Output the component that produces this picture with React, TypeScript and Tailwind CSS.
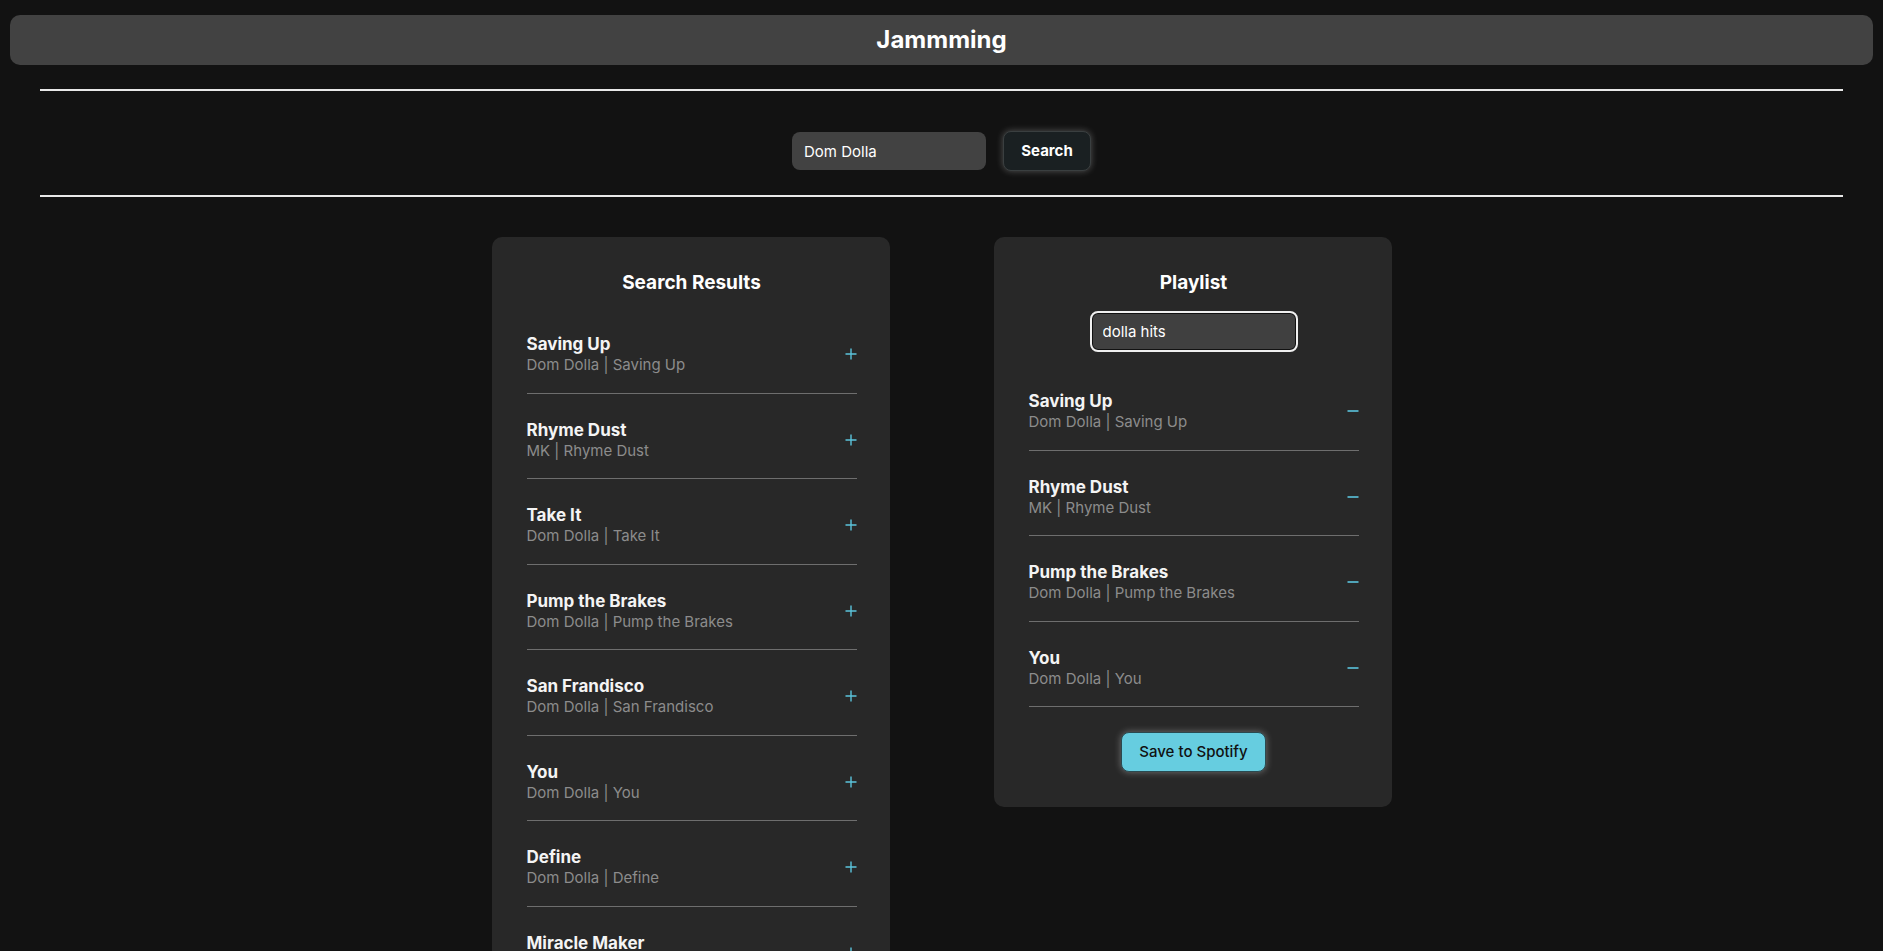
import React from "react";

type Track = { name: string; artist: string; album: string };

const results: Track[] = [
  { name: "Saving Up", artist: "Dom Dolla", album: "Saving Up" },
  { name: "Rhyme Dust", artist: "MK", album: "Rhyme Dust" },
  { name: "Take It", artist: "Dom Dolla", album: "Take It" },
  { name: "Pump the Brakes", artist: "Dom Dolla", album: "Pump the Brakes" },
  { name: "San Frandisco", artist: "Dom Dolla", album: "San Frandisco" },
  { name: "You", artist: "Dom Dolla", album: "You" },
  { name: "Define", artist: "Dom Dolla", album: "Define" },
  { name: "Miracle Maker", artist: "Dom Dolla", album: "Miracle Maker" },
  { name: "Eat Your Man", artist: "Dom Dolla", album: "Eat Your Man" },
  { name: "Girl$", artist: "Dom Dolla", album: "Girl$" },
];

const playlist: Track[] = [results[0], results[1], results[3], results[5]];

function PlusIcon() {
  return (
    <svg width="12" height="12" viewBox="0 0 12 12" className="text-[#5bc4dc]">
      <path d="M6 0.5v11M0.5 6h11" stroke="currentColor" strokeWidth="1.4" fill="none" />
    </svg>
  );
}

function MinusIcon() {
  return (
    <svg width="12" height="12" viewBox="0 0 12 12" className="text-[#5bc4dc]">
      <path d="M0.5 6h11" stroke="currentColor" strokeWidth="1.6" fill="none" />
    </svg>
  );
}

function TrackRow({ track, action }: { track: Track; action: "add" | "remove" }) {
  return (
    <li className="flex items-center justify-between border-b border-[#6e6e6e] pt-[25px] pb-[17.5px]">
      <div className="flex flex-col">
        <span className="text-[17px] leading-[22px] font-bold text-[#f4f4f4]">{track.name}</span>
        <span className="text-[15px] leading-[20px] text-[#8c8c8c]">
          {track.artist} | {track.album}
        </span>
      </div>
      <button type="button" className="flex h-[20px] w-[14px] items-center justify-end" aria-label={action === "add" ? "Add track" : "Remove track"}>
        {action === "add" ? <PlusIcon /> : <MinusIcon />}
      </button>
    </li>
  );
}

export default function App() {
  return (
    <div className="min-h-screen bg-[#121212] pt-[15px] font-['Inter','Liberation_Sans',sans-serif] text-white">
      <header className="mx-[10px] flex h-[50px] items-center justify-center rounded-[10px] bg-[#424242]">
        <h1 className="text-[24px] font-bold">Jammming</h1>
      </header>

      <hr className="mx-[40px] mt-[24px] border-0 border-t-2 border-[#e8e8e8]" />

      <div className="flex items-center justify-center gap-[17px] pt-[40px] pb-[24px]">
        <input
          className="h-[38px] w-[194px] rounded-[8px] bg-[#424242] px-[12px] text-[15px] text-white outline-none"
          defaultValue="Dom Dolla"
        />
        <button
          type="button"
          className="h-[40px] w-[88px] rounded-[8px] border border-[#3a3f40] bg-[#1a2022] text-[15px] font-bold text-white shadow-[0_0_7px_rgba(255,255,255,0.28)]"
        >
          Search
        </button>
      </div>

      <hr className="mx-[40px] border-0 border-t-2 border-[#e8e8e8]" />

      <main className="mt-[40px] flex items-start justify-center gap-[104px] pb-[40px]">
        <section className="w-[398px] rounded-[10px] bg-[#282828] pt-[32px] pr-[33px] pb-[30px] pl-[35px]">
          <h2 className="text-center text-[19px] leading-[28px] font-bold">Search Results</h2>
          <ul className="mt-[11px]">
            {results.map((t) => (
              <TrackRow key={t.name} track={t} action="add" />
            ))}
          </ul>
        </section>

        <section className="flex w-[398px] flex-col items-center rounded-[10px] bg-[#282828] pt-[32px] pr-[33px] pb-[35px] pl-[35px]">
          <h2 className="text-center text-[19px] leading-[28px] font-bold">Playlist</h2>
          <input
            className="mt-[14px] h-[41px] w-[208px] rounded-[8px] border-2 border-[#f0f0f0] bg-[#404040] px-[11px] text-[15px] text-white outline-none shadow-[inset_0_0_0_1px_#111]"
            defaultValue="dolla hits"
          />
          <ul className="mt-[13px] w-full">
            {playlist.map((t) => (
              <TrackRow key={t.name} track={t} action="remove" />
            ))}
          </ul>
          <button
            type="button"
            className="mt-[25px] h-[40px] w-[145px] rounded-[8px] border border-[#2a4a50] bg-[#66cde0] text-[15px] font-medium text-[#111] shadow-[0_0_7px_rgba(255,255,255,0.35)]"
          >
            Save to Spotify
          </button>
        </section>
      </main>
    </div>
  );
}
